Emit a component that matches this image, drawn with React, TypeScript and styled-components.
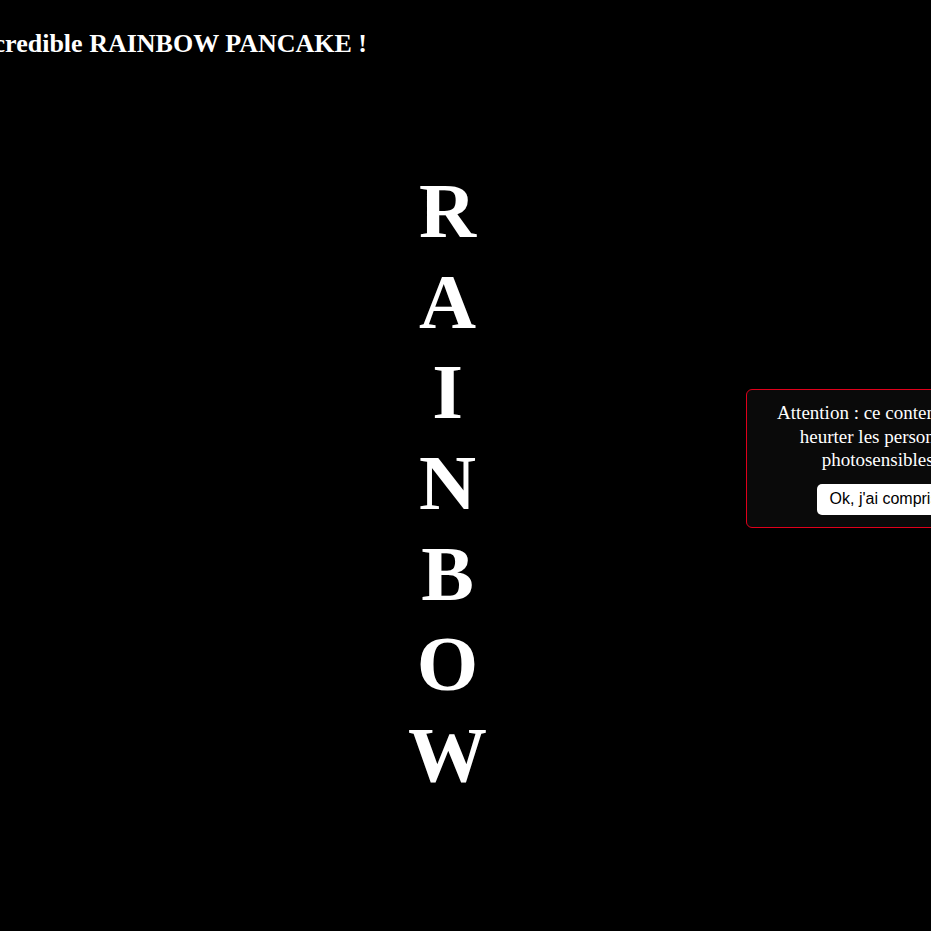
import React from "react";
import styled, { createGlobalStyle } from "styled-components";

const GlobalStyle = createGlobalStyle`
  html, body {
    margin: 0;
    padding: 0;
    background: #000;
    overflow: hidden;
  }
  body {
    font-family: "Liberation Serif", "Times New Roman", serif;
    color: #fff;
  }
`;

const Page = styled.div`
  position: relative;
  width: 931px;
  height: 931px;
  background: #000;
  overflow: hidden;
`;

const Banner = styled.h1`
  margin: 0;
  padding-top: 29px;
  margin-left: -31px;
  font-size: 26px;
  font-weight: 700;
  line-height: 30px;
  white-space: nowrap;
  color: #fff;
`;

const Column = styled.div`
  display: flex;
  flex-direction: column;
  align-items: center;
  width: 100px;
  margin-top: 107px;
  margin-left: 397.5px;
`;

const Letter = styled.span`
  display: block;
  font-size: 79px;
  font-weight: 700;
  line-height: 90.67px;
  color: #fff;
`;

const Warning = styled.div`
  position: absolute;
  left: 746px;
  top: 389px;
  box-sizing: border-box;
  width: 268px;
  padding: 11px 20px 12px;
  background: #0a0a0a;
  border: 1px solid #e0001b;
  border-radius: 6px;
  display: flex;
  flex-direction: column;
  align-items: center;
  text-align: center;
`;

const WarningText = styled.p`
  margin: 0;
  font-size: 19px;
  line-height: 23.5px;
  color: #fff;
`;

const OkButton = styled.button`
  margin-top: 12px;
  margin-left: 8px;
  padding: 6.5px 13px;
  font-family: "Liberation Sans", Arial, sans-serif;
  font-size: 16px;
  line-height: 18px;
  color: #000;
  background: #fff;
  border: none;
  border-radius: 5px;
  cursor: pointer;
`;

export default function App() {
  const letters = "RAINBOW".split("");
  return (
    <>
      <GlobalStyle />
      <Page>
        <Banner>Incredible RAINBOW PANCAKE !</Banner>
        <Column>
          {letters.map((l, i) => (
            <Letter key={i}>{l}</Letter>
          ))}
        </Column>
        <Warning>
          <WarningText>
            Attention : ce contenu peut heurter les personnes photosensibles.
          </WarningText>
          <OkButton>Ok, j'ai compris</OkButton>
        </Warning>
      </Page>
    </>
  );
}
